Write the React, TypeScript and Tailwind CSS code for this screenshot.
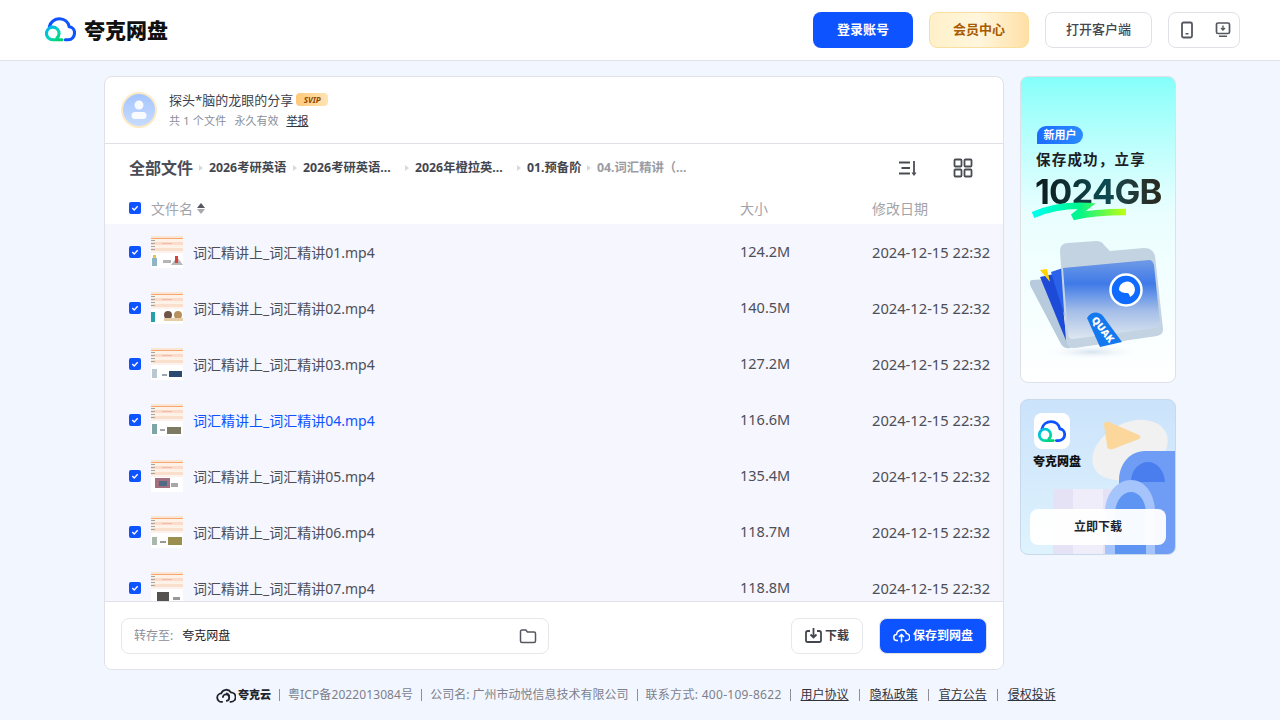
import type { ReactNode } from 'react';

const FONT = 'font-["Noto_Sans","Noto_Sans_CJK_SC",sans-serif]';

const files = [
  { name: '词汇精讲上_词汇精讲01.mp4', size: '124.2M', scene: 0 },
  { name: '词汇精讲上_词汇精讲02.mp4', size: '140.5M', scene: 1 },
  { name: '词汇精讲上_词汇精讲03.mp4', size: '127.2M', scene: 2 },
  { name: '词汇精讲上_词汇精讲04.mp4', size: '116.6M', scene: 3, active: true },
  { name: '词汇精讲上_词汇精讲05.mp4', size: '135.4M', scene: 4 },
  { name: '词汇精讲上_词汇精讲06.mp4', size: '118.7M', scene: 5 },
  { name: '词汇精讲上_词汇精讲07.mp4', size: '118.8M', scene: 6 },
];

const crumbs = [
  { label: '2026考研英语', w: 'w-[78px]' },
  { label: '2026考研英语…', w: 'w-[96px]' },
  { label: '2026年橙拉英…', w: 'w-[96px]' },
  { label: '01.预备阶', w: 'w-[54px]' },
];

function CloudLogo({ size = 32 }: { size?: number }) {
  return (
    <svg width={size} height={size * 0.8125} viewBox="0 0 32 26" fill="none">
      <defs>
        <linearGradient id={`lg${size}`} x1="0" y1="0" x2="1" y2="1">
          <stop offset="0" stopColor="#00b4f0" />
          <stop offset="0.6" stopColor="#00d8b0" />
          <stop offset="1" stopColor="#00d060" />
        </linearGradient>
      </defs>
      <path
        d="M4.500 10C5.500 5 10 1.800 15 1.800c5 0 9 3.400 10 8.200 3.200.3 5.500 3 5.500 6.500 0 3.600-2.700 7-6.500 7H21"
        stroke="#0d53ff"
        strokeWidth="3.200"
        strokeLinecap="round"
      />
      <path
        d="M17.500 23.500H8a6.500 6.500 0 1 1 6.500-6.500c0 1.800-.7 3.300-2 4.300"
        stroke={`url(#lg${size})`}
        strokeWidth="3.200"
        strokeLinecap="round"
      />
    </svg>
  );
}

function Checkbox() {
  return (
    <span className="flex h-3 w-3 shrink-0 items-center justify-center rounded-[2px] bg-[#0d53ff]">
      <svg width="8" height="8" viewBox="0 0 8 8" fill="none">
        <path d="M1.300 4.100 3.200 6l3.500-3.800" stroke="#fff" strokeWidth="1.400" />
      </svg>
    </span>
  );
}

function Thumb({ scene }: { scene: number }) {
  const bottoms: ReactNode[] = [
    <g key="0">
      <rect x="1" y="22" width="5" height="8" fill="#8fb4c4" />
      <rect x="2" y="19" width="3" height="3" fill="#e9c63f" />
      <rect x="12" y="24" width="8" height="3" fill="#b5b5b5" />
      <path d="M20 29l6-8 6 8z" fill="#b8b8b8" />
      <rect x="24" y="20" width="3" height="7" fill="#d9423a" />
    </g>,
    <g key="1">
      <rect x="0" y="20" width="4" height="10" fill="#27a0a8" />
      <circle cx="17" cy="23" r="4" fill="#6f5547" />
      <circle cx="27" cy="23" r="4" fill="#b7925f" />
      <rect x="13" y="26" width="19" height="3" fill="#e6cfa6" />
    </g>,
    <g key="2">
      <rect x="1" y="21" width="5" height="9" fill="#b9c7cf" />
      <rect x="11" y="26" width="5" height="2" fill="#9aa7ae" />
      <rect x="18" y="23" width="13" height="6" fill="#2a4a72" />
    </g>,
    <g key="3">
      <rect x="1" y="20" width="5" height="10" fill="#7fa5a6" />
      <rect x="9" y="25" width="5" height="2" fill="#a5a5a5" />
      <rect x="16" y="23" width="14" height="7" fill="#7c7a63" />
    </g>,
    <g key="4">
      <rect x="4" y="18" width="15" height="10" fill="#a46f7e" />
      <rect x="8" y="21" width="8" height="5" fill="#4e6a84" />
      <rect x="20" y="23" width="7" height="4" fill="#a8a8a8" />
    </g>,
    <g key="5">
      <rect x="1" y="21" width="5" height="8" fill="#a9b8a8" />
      <rect x="9" y="25" width="6" height="2" fill="#999" />
      <rect x="17" y="21" width="14" height="8" fill="#9b8f4f" />
    </g>,
    <g key="6">
      <rect x="6" y="20" width="12" height="10" fill="#55514f" />
      <rect x="22" y="25" width="7" height="3" fill="#999" />
    </g>,
  ];
  return (
    <svg width="32" height="32" viewBox="0 0 32 32" className="shrink-0">
      <rect width="32" height="32" fill="#fff" />
      <rect y="0" width="32" height="2" fill="#fbe6d6" />
      <rect y="2" width="32" height="1" fill="#f4a76e" />
      <rect y="3" width="32" height="3" fill="#fdf1e8" />
      <rect y="6" width="32" height="3" fill="#fbdccb" />
      <rect y="9" width="32" height="3" fill="#fdf1e8" />
      <rect y="12" width="32" height="3" fill="#fbdfcd" />
      <rect y="15" width="32" height="2" fill="#fdf3ec" />
      <rect x="0" y="4" width="4" height="1" fill="#a5a5a5" />
      <rect x="0" y="7" width="4" height="1" fill="#a5a5a5" />
      <rect x="0" y="10" width="4" height="1" fill="#a5a5a5" />
      <rect x="0" y="13" width="4" height="1" fill="#a5a5a5" />
      <rect x="11" y="7" width="10" height="1" fill="#f5b8ab" />
      {bottoms[scene]}
    </svg>
  );
}

function Header() {
  return (
    <header className="flex h-[61px] shrink-0 items-center justify-between border-b border-[#dfe3ea] bg-white pr-[40px] pl-[45px]">
      <div className="flex items-center gap-[8px]">
        <CloudLogo size={31} />
        <span className="text-[21px] leading-none font-black text-[#111]">夸克网盘</span>
      </div>
      <div className="flex items-center gap-4">
        <button className="flex h-9 w-[100px] items-center justify-center rounded-lg bg-[#0d53ff] text-[13px] font-bold text-white">
          登录账号
        </button>
        <button className="flex h-9 w-[100px] items-center justify-center rounded-lg border border-[#fbdf9e] bg-gradient-to-r from-[#fff0c9] via-[#fff6dd] to-[#ffe0a6] text-[13px] font-bold text-[#a85a00]">
          会员中心
        </button>
        <button className="flex h-9 w-[107px] items-center justify-center rounded-lg border border-[#dfe1e6] bg-white text-[13px] font-medium text-[#44464f]">
          打开客户端
        </button>
        <div className="flex h-9 w-[72px] items-center justify-between rounded-lg border border-[#dfe1e6] bg-white pr-[8px] pl-[11px]">
          <svg width="14" height="18" viewBox="0 0 14 18" fill="none">
            <rect x="2" y="1.500" width="10" height="15" rx="1.500" stroke="#55575f" strokeWidth="1.800" />
            <rect x="5.500" y="12" width="3" height="1.500" fill="#55575f" />
          </svg>
          <svg width="16" height="18" viewBox="0 0 16 18" fill="none">
            <rect x="1.500" y="2" width="13" height="10.500" rx="1.500" stroke="#55575f" strokeWidth="1.700" />
            <path d="M8 4.500v4M6 7l2 2 2-2" stroke="#55575f" strokeWidth="1.400" />
            <rect x="4" y="14.500" width="8" height="1.500" fill="#55575f" />
          </svg>
        </div>
      </div>
    </header>
  );
}

function ShareInfo() {
  return (
    <div className="flex h-[67px] shrink-0 items-center border-b border-[#dfe1e6] pl-4">
      <div className="flex h-9 w-9 shrink-0 items-center justify-center rounded-full border-2 border-[#fdeac4] bg-gradient-to-b from-[#a5c5ff] to-[#c7dcff]">
        <svg width="20" height="24" viewBox="0 0 20 24">
          <circle cx="10" cy="7" r="4.500" fill="#fff" fillOpacity="0.9" />
          <rect x="2.500" y="14" width="15" height="7" rx="3.500" fill="#fff" fillOpacity="0.9" />
        </svg>
      </div>
      <div className="ml-[12px]">
        <div className="flex h-[20px] items-center">
          <span className="text-[13px] leading-5 text-[#3e3f4a]">探头*脑的龙眼的分享</span>
          <span className="ml-[3px] flex h-[13px] w-[32px] items-center justify-center rounded-[4px] bg-gradient-to-r from-[#ffc878] to-[#ffe4b5] text-[8px] font-bold text-[#8a4a00] italic">
            SVIP
          </span>
        </div>
        <div className="mt-[3px] flex h-[18px] items-center text-[11px] text-[#8c8e99]">
          <span className="tracking-[0.2px]">共 1 个文件</span>
          <span className="ml-[8px]">永久有效</span>
          <a className="ml-[8px] text-[#30323c] underline">举报</a>
        </div>
      </div>
    </div>
  );
}

function Crumbs() {
  return (
    <div className="flex h-[48px] shrink-0 items-center pr-[30px] pl-[24px]">
      <span className="text-[16px] font-bold whitespace-nowrap text-[#4a4c57]">全部文件</span>
      {crumbs.map((c) => (
        <div key={c.label} className="flex items-center">
          <span className="mx-[6px] h-0 w-0 border-y-[3px] border-l-[4px] border-y-transparent border-l-[#d8d9de]" />
          <span className={`${c.w} mt-[1px] text-[12.300px] font-bold whitespace-nowrap text-[#44464f]`}>{c.label}</span>
        </div>
      ))}
      <span className="mx-[6px] h-0 w-0 border-y-[3px] border-l-[4px] border-y-transparent border-l-[#d8d9de]" />
      <span className="mt-[1px] text-[12.300px] font-bold whitespace-nowrap text-[#9b9ca3]">04.词汇精讲（…</span>
      <div className="ml-auto flex items-center gap-[35px]">
        <svg width="20" height="20" viewBox="0 0 20 20" fill="none" stroke="#4a4c54" strokeWidth="1.800">
          <path d="M1 4.500h11M3.500 10H12M1 15.500h11" />
          <path d="M16 3v13" />
          <path d="M14 14.500l2 2.500 2-2.500" strokeWidth="1.200" />
        </svg>
        <svg width="20" height="20" viewBox="0 0 20 20" fill="none" stroke="#4a4c54" strokeWidth="1.800">
          <rect x="1.500" y="1.500" width="7" height="7" rx="1" />
          <rect x="11.500" y="1.500" width="7" height="7" rx="1" />
          <rect x="1.500" y="11.500" width="7" height="7" rx="1" />
          <rect x="11.500" y="11.500" width="7" height="7" rx="1" />
        </svg>
      </div>
    </div>
  );
}

function FileTable() {
  return (
    <>
      <div className="flex h-[32px] shrink-0 items-center pl-[24px] text-[14px] text-[#a3a4aa]">
        <Checkbox />
        <span className="ml-[10px]">文件名</span>
        <span className="ml-[4px] flex flex-col gap-[1px]">
          <span className="h-0 w-0 border-x-[4px] border-b-[5px] border-x-transparent border-b-[#55575f]" />
          <span className="h-0 w-0 border-x-[4px] border-t-[5px] border-x-transparent border-t-[#a8a9ae]" />
        </span>
        <span className="ml-auto w-[132px]">大小</span>
        <span className="w-[131px]">修改日期</span>
      </div>
      <div className="min-h-0 flex-1 overflow-hidden bg-[#f5f6fe]">
        {files.map((f) => (
          <div key={f.name} className="flex h-[56px] items-center pl-[24px] text-[#4d4f58]">
            <Checkbox />
            <span className="ml-[10px]">
              <Thumb scene={f.scene} />
            </span>
            <span className={`ml-[10px] text-[14px] ${f.active ? 'text-[#0d53ff]' : ''}`}>{f.name}</span>
            <span className="ml-auto w-[132px] text-[14.500px]">{f.size}</span>
            <span className="w-[131px] text-[14.700px] whitespace-nowrap">2024-12-15 22:32</span>
          </div>
        ))}
      </div>
    </>
  );
}

function SaveBar() {
  return (
    <div className="flex h-[68px] shrink-0 items-center border-t border-[#dfe1e6] bg-white px-4">
      <div className="flex h-9 w-[428px] items-center rounded-lg border border-[#e6e7eb] pr-[11px] pl-[12px] text-[12px]">
        <span className="text-[#8c8e99]">转存至:</span>
        <span className="ml-[9px] text-[#1e2028]">夸克网盘</span>
        <svg className="ml-auto" width="18" height="18" viewBox="0 0 18 18" fill="none">
          <path
            d="M1.500 4.500c0-.8.600-1.500 1.500-1.500h3.800l1.700 2H15c.8 0 1.500.700 1.500 1.500V14c0 .8-.7 1.500-1.500 1.500H3c-.9 0-1.500-.7-1.500-1.500z"
            stroke="#55575f"
            strokeWidth="1.500"
          />
        </svg>
      </div>
      <button className="ml-auto flex h-9 w-[72px] items-center justify-center gap-[3px] rounded-lg border border-[#e6e7eb] bg-white text-[12px] font-bold text-[#3e404a]">
        <svg width="17" height="17" viewBox="0 0 17 17" fill="none" stroke="#44464f" strokeWidth="1.800">
          <path d="M5 4H2.800C1.800 4 1 4.800 1 5.800v7.400c0 1 .8 1.800 1.800 1.800h11.400c1 0 1.800-.8 1.800-1.800V5.800c0-1-.8-1.800-1.800-1.800H12" />
          <path d="M8.500 1v8.500M5.500 7.500l3 3 3-3" />
        </svg>
        下载
      </button>
      <button className="ml-4 flex h-9 w-[108px] items-center justify-center gap-[3px] rounded-lg border border-[#dfe1e6] bg-[#0d53ff] text-[12px] font-bold text-white">
        <svg width="17" height="17" viewBox="0 0 17 17" fill="none" stroke="#fff" strokeWidth="1.500">
          <path d="M5 13.500H4a3 3 0 0 1-.4-6A5 5 0 0 1 13.400 6.500a3.500 3.500 0 0 1-.4 7h-1" />
          <path d="M8.500 15.500V8M6 10l2.500-2.500L11 10" />
        </svg>
        保存到网盘
      </button>
    </div>
  );
}

function StorageAd() {
  return (
    <div className="relative h-[307px] overflow-hidden rounded-lg border border-[#dfe1e6] bg-gradient-to-b from-[#84fffa] via-[#eafeff] via-[45%] to-white">
      <div className="mt-[49px] ml-[16px] flex h-[18px] w-[46px] items-center justify-center rounded-[9px] rounded-bl-none bg-gradient-to-r from-[#1d6cff] to-[#2b8bff] text-[11px] font-bold text-white">
        新用户
      </div>
      <div className="mt-[3px] ml-[15px] text-[14.500px] leading-[24px] font-bold tracking-[1.200px] whitespace-nowrap text-[#1c2026]">
        保存成功，立享
      </div>
      <div className="mt-[3px] ml-[14px] bg-gradient-to-r from-[#0d1a1a] via-[#0b4a52] to-[#2a2010] bg-clip-text font-['Inter',sans-serif] text-[34.500px] leading-[36px] font-bold tracking-[-0.8px] text-transparent">
        1024GB
      </div>
      <svg className="absolute top-[124px] left-[10px]" width="100" height="24" viewBox="0 0 100 24" fill="none">
        <defs>
          <linearGradient id="swoosh" x1="0" x2="1" y1="0" y2="0">
            <stop offset="0" stopColor="#00fff0" />
            <stop offset="0.5" stopColor="#00f58a" />
            <stop offset="1" stopColor="#c2ff10" />
          </linearGradient>
        </defs>
        <path d="M2 14 C16 8 36 4 56 5 L42 16 C58 12 74 11 95 11" stroke="url(#swoosh)" strokeWidth="6.500" />
      </svg>
      <svg className="absolute top-[160px] left-[8px]" width="140" height="130" viewBox="0 0 140 130" fill="none">
        <defs>
          <linearGradient id="fold" x1="0" x2="0" y1="0" y2="1">
            <stop offset="0" stopColor="#6f9ae6" />
            <stop offset="0.3" stopColor="#3f7ae8" />
            <stop offset="0.65" stopColor="#a5bfe8" />
            <stop offset="1" stopColor="#dfe7f0" />
          </linearGradient>
          <radialGradient id="shadow">
            <stop offset="0" stopColor="#d5e3ee" />
            <stop offset="1" stopColor="#ffffff" stopOpacity="0" />
          </radialGradient>
        </defs>
        <ellipse cx="63" cy="115" rx="50" ry="8" fill="url(#shadow)" />
        <path d="M3 43c-2 0-3 3-1 7l30 57c3 5 8 5 11 3L19 42z" fill="#b7cbdc" />
        <path d="M11 40 38 106 30 36z" fill="#1d4bd8" />
        <path d="M22 35 42 100 34 31z" fill="#2b62ea" />
        <path d="M11 33l7-1 3 13z" fill="#ffd400" />
        <path d="M31 14c0-5 3-8 8-8l28-2c4 0 6 1 8 4l6 6 34-3c6 0 10 3 11 8l8 73c0 4-2 6-6 7l-82 12c-5 0-8-2-9-7z" fill="#c3d3e1" />
        <path d="M34 31l86-8c3 0 4 2 5 5l6 58c0 3-1 4-4 5l-83 11c-3 0-4-1-5-4z" fill="url(#fold)" />
        <circle cx="97" cy="53" r="15.500" fill="#0f6bff" stroke="#fff" strokeWidth="2.500" />
        <path d="M90 53a8 8 0 1 1 11 7c-1-3-1-4-3-4-3 0-5 0-8-3z" fill="#fff" />
        <path d="M58 81c4-7 12-7 16-2l19 26-22 5z" fill="#1478ee" />
        <text x="62" y="83" transform="rotate(52 62 83)" fill="#fff" fontSize="10" fontWeight="900">
          QUAK
        </text>
      </svg>
    </div>
  );
}

function DownloadAd() {
  return (
    <div className="relative h-[156px] overflow-hidden rounded-lg border border-[#c9d9ec] bg-gradient-to-b from-[#cbe3fb] to-[#dff3fd]">
      <svg className="absolute top-0 left-0" width="156" height="156" viewBox="0 0 156 156" fill="none">
        <path d="M32 89h64v67H32z" fill="#e6e2f6" />
        <path d="M52 89h30v67H52z" fill="#efedfa" />
        <ellipse cx="109" cy="50" rx="40" ry="27" transform="rotate(-27 109 50)" fill="#f1f1f1" />
        <path d="M83 25c0-3 2-4 5-3l30 13c2 1 2 3 0 4l-26 10c-4 1-6 0-6-4z" fill="#fbd79c" />
        <path d="M98 156V80c0-15 10-29 26-29h32v105z" fill="#6f9cf4" />
        <path d="M110 82c0-12 8-20 17-20s16 8 17 20z" fill="#4a7eee" />
        <path d="M84 156v-44c0-18 12-32 26-32s24 14 24 32v44z" fill="#a5c4fb" />
        <path d="M94 156v-42c0-12 7-22 16-22s15 10 15 22v42z" fill="#5f95f2" />
      </svg>
      <div className="relative mt-[13px] ml-[13px] flex h-9 w-9 items-center justify-center rounded-lg bg-white">
        <CloudLogo size={28} />
      </div>
      <div className="relative mt-[3px] ml-[12px] text-[12px] leading-[20px] font-black text-[#111]">夸克网盘</div>
      <div className="absolute right-[9px] bottom-[9px] left-[9px] flex h-9 items-center justify-center rounded-lg bg-white/95 text-[12px] font-bold text-[#22242c]">
        立即下载
      </div>
    </div>
  );
}

function Footer() {
  const Sep = () => <span className="mx-[8px] h-[12px] w-px bg-[#8c8e99]" />;
  const links = ['用户协议', '隐私政策', '官方公告', '侵权投诉'];
  return (
    <footer className="flex h-[50px] shrink-0 items-center pl-[216px] text-[12px] text-[#7d7f8c]">
      <svg width="20" height="17" viewBox="0 0 18 16" fill="none" stroke="#22242c" strokeWidth="1.700">
        <path d="M6 14H5a4 4 0 0 1-.5-8A5 5 0 0 1 13.500 5a4.500 4.500 0 0 1 0 9h-1" />
        <path d="M6 10a3 3 0 1 1 3 3" />
        <path d="M12 9a3 3 0 0 0-3-3" />
      </svg>
      <span className="ml-[2px] text-[11px] font-black text-[#22242c]">夸克云</span>
      <span className="mr-[8px] ml-[8px] h-[12px] w-px bg-[#8c8e99]" />
      <span className="tracking-[0.1px]">粤ICP备2022013084号</span>
      <Sep />
      <span>公司名: 广州市动悦信息技术有限公司</span>
      <Sep />
      <span className="tracking-[0.3px]">联系方式: 400-109-8622</span>
      {links.map((l) => (
        <span key={l} className="flex items-center">
          <span className="mx-[8px] h-[12px] w-px bg-[#8c8e99]" />
          <a className="mr-[2px] ml-[2px] text-[#30323c] underline">{l}</a>
        </span>
      ))}
    </footer>
  );
}

export default function App() {
  return (
    <div className={`flex h-[720px] flex-col overflow-hidden bg-[#f2f6fe] ${FONT}`}>
      <Header />
      <main className="flex h-[609px] shrink-0 justify-center gap-4 pt-[15px]">
        <section className="flex h-[594px] w-[900px] flex-col overflow-hidden rounded-lg border border-[#dfe1e6] bg-white">
          <ShareInfo />
          <Crumbs />
          <FileTable />
          <SaveBar />
        </section>
        <aside className="flex w-[156px] flex-col gap-4">
          <StorageAd />
          <DownloadAd />
        </aside>
      </main>
      <Footer />
    </div>
  );
}
